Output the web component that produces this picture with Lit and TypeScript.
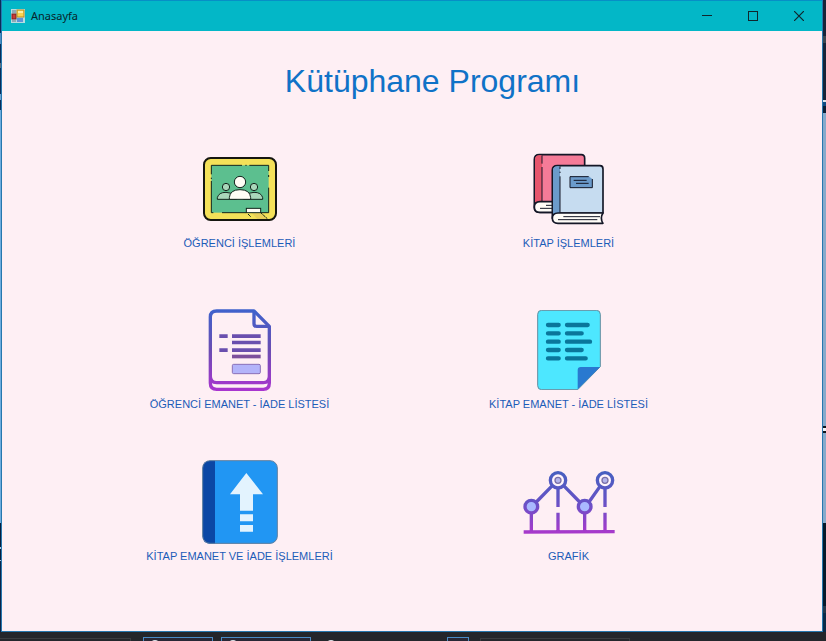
import { LitElement, html, css, svg } from "lit";
import { customElement, property } from "lit/decorators.js";

const board = svg`<svg width="76" height="66" viewBox="96 33 228 198" aria-hidden="true">
  <rect x="102" y="39" width="216" height="186" rx="20" fill="#f4e159" stroke="#15160f" stroke-width="6"/>
  <rect x="124" y="61" width="172" height="142" fill="#5cbf8f"/>
  <path d="M124 88V61H216M226 61H230M238 61H296V78M296 90V96M296 128V203H272M228 203H156M130 203H124V108M124 102V98" fill="none" stroke="#12241c" stroke-width="3"/>
  <g stroke="#12241c" stroke-width="3">
    <circle cx="168" cy="126" r="11" fill="#a9d6ba"/><circle cx="252" cy="126" r="11" fill="#a9d6ba"/>
    <path d="M142 163V158Q146 142 168 142Q184 142 190 152L200 163Z" fill="#a9d6ba"/>
    <path d="M278 163V158Q274 142 252 142Q236 142 230 152L220 163Z" fill="#a9d6ba"/>
    <circle cx="210" cy="111" r="17" fill="#fffdf5"/>
    <path d="M178 163V158Q180 134 210 134Q240 134 242 158V163Z" fill="#fffdf5"/>
    <path d="M244 203H272L292 222H262Z" fill="#e9cf59" stroke="none"/>
    <path d="M272 203L292 221M234 207L243 216" fill="none" stroke-dasharray="8 2"/>
    <rect x="229" y="190" width="43" height="13" fill="#fffdf5"/>
  </g>
</svg>`;

const books = svg`<svg width="72" height="72" viewBox="103 24 216 216" aria-hidden="true">
  <g stroke="#141727" stroke-width="5" stroke-linejoin="round">
    <path d="M107 188V44Q107 29 122 29H248Q258 29 258 40V202H124Q107 202 107 188Z" fill="#f57b98"/>
    <path d="M109 180V44Q109 31 122 31H130V170Q114 170 109 180Z" fill="#e6556c" stroke="none"/>
    <path d="M107 186Q107 170 124 170H170V202H124Q107 202 107 186Z" fill="#fffdf8"/>
    <path d="M130 31V56M130 66V169" stroke-width="3"/>
    <path d="M142 181H162M124 190H162" stroke-width="3" fill="none"/>
    <path d="M161 220V76Q161 62 176 62H304Q313 62 313 72V204H178Q161 206 161 220Z" fill="#c6dcf0"/>
    <path d="M163 212V76Q163 64 176 64H184V203Q170 204 163 212Z" fill="#6b9bcb" stroke="none"/>
    <path d="M184 64V72M184 80V84M184 94V203" stroke-width="3"/>
    <path d="M313 204H178Q161 204 161 220Q161 235 178 235H313Q303 219 313 204Z" fill="#fffdf8"/>
    <path d="M194 215H304M178 224H296" stroke-width="3" fill="none"/>
    <path d="M214 94H270L281 102V128H214Z" fill="#6b9bcb" stroke="none"/>
    <path d="M270 95H214V128H281V102" stroke-width="3" fill="none"/>
    <path d="M225 106H264M232 115H270" stroke-width="3" fill="none"/>
  </g>
</svg>`;

const form = svg`<svg width="64" height="82" viewBox="204 26 192 246" aria-hidden="true">
  <defs><linearGradient id="form" gradientUnits="userSpaceOnUse" x1="0" y1="28" x2="0" y2="270">
    <stop offset="0" stop-color="#3f62cc"/><stop offset=".5" stop-color="#6a4db2"/><stop offset="1" stop-color="#a935cf"/>
  </linearGradient></defs>
  <g fill="none" stroke="url(#form)" stroke-width="10" stroke-linejoin="round">
    <path d="M211 228V50Q211 32 230 32H342L388 78V228Q388 247 370 247H230Q211 247 211 228V248Q211 267 230 267H370Q388 267 388 248V228"/>
    <path d="M342 32V70Q342 78 350 78H388"/>
  </g>
  <g fill="#6a4fae">
    <path d="M238 102H263V113H238ZM276 102H362V113H276ZM276 121H362V132H276ZM238 144H263V155H238ZM276 144H362V155H276Z"/>
    <path d="M276 163H362V174H276Z" fill="#7d509c"/>
  </g>
  <rect x="277" y="192" width="84" height="28" rx="4" fill="#b3b4fa" stroke="#8a70b8" stroke-width="3"/>
</svg>`;

const sheet = svg`<svg width="64" height="80" viewBox="174 30 192 240" aria-hidden="true">
  <path d="M188 31H352Q364 31 364 43V200L296 269H188Q176 269 176 257V43Q176 31 188 31Z" fill="#4de7ff" stroke="#668ea0" stroke-width="3"/>
  <path d="M296 268V210Q296 201 305 201H363Z" fill="#2979d0"/>
  <path d="M207 75H239M264 75H326M207 100H239M264 100H308M207 125H239M264 125H333M207 150H239M264 150H308M207 175H239M264 175H320" stroke="#0a769b" stroke-width="13" stroke-linecap="round"/>
</svg>`;

const upload = svg`<svg width="76" height="84" viewBox="186 29 228 252" aria-hidden="true">
  <rect x="188" y="31" width="224" height="249" rx="22" fill="#2196f3"/>
  <path d="M225 31H210Q188 31 188 53V258Q188 280 210 280H225Z" fill="#0b47a5"/>
  <rect x="188" y="31" width="224" height="248" rx="22" fill="none" stroke="#62809f" stroke-width="3"/>
  <path d="M319 68L369 132H339V181H300V132H270ZM300 192H339V213H300ZM300 224H339V244H300Z" fill="#e3f3fe"/>
</svg>`;

const chart = svg`<svg width="92" height="66" viewBox="72 56 276 198" aria-hidden="true">
  <defs><linearGradient id="chart" gradientUnits="userSpaceOnUse" x1="0" y1="62" x2="0" y2="248">
    <stop offset="0" stop-color="#4660c0"/><stop offset=".5" stop-color="#6652c6"/><stop offset="1" stop-color="#a839cb"/>
  </linearGradient></defs>
  <g fill="none" stroke="url(#chart)" stroke-width="10">
    <path d="M112 155L160 106M194 106L242 155M270 155L303 108M97 190V244M177 114V170M177 187V244M257 190V244M318 114V170M318 187V244M74 245L347 244"/>
    <circle cx="177" cy="90" r="23" fill="#fff5fb"/><circle cx="318" cy="90" r="23" fill="#fff5fb"/>
    <circle cx="97" cy="169" r="19" fill="#a9b9ff"/><circle cx="257" cy="169" r="19" fill="#a9b9ff"/>
  </g>
  <g fill="#b5b5ec" stroke="#7a70a8" stroke-width="4"><circle cx="177" cy="90" r="9"/><circle cx="318" cy="90" r="9"/></g>
</svg>`;

@customElement("menu-tile")
class MenuTile extends LitElement {
  @property() label = "";
  @property({ attribute: false }) icon: unknown;

  static styles = css`
    :host { display: block; }
    .tile {
      display: flex; flex-direction: column; align-items: center; gap: 4px;
      width: 100%; padding: 0; border: 0; background: none; cursor: pointer;
      font: 11px/16px "Liberation Sans", Arial, sans-serif; color: #1c5cb8; white-space: nowrap;
    }
    .icon { display: flex; align-items: center; justify-content: center; height: 84px; }
    .icon svg { display: block; }
  `;

  render() {
    return html`<button class="tile" type="button"><span class="icon">${this.icon}</span><span>${this.label}</span></button>`;
  }
}

@customElement("app-root")
class AppRoot extends LitElement {
  static styles = css`
    :host {
      display: flex; flex-direction: column; min-height: 100vh; background: #24262b;
      font-family: "Liberation Sans", Arial, sans-serif;
    }
    .desktop { display: flex; flex: 1; }
    .edge-left {
      width: 1px;
      background: linear-gradient(#0a2b57 33px, #4f8fc4 33px 44px, #0a2b57 44px 63px, #5d6d80 63px 68px,
        #0a2b57 68px 94px, #6fa5d5 94px 100px, #0a2b57 100px 110px, #6fadde 110px 523px,
        #071d3c 523px 547px, #a9c9e6 547px 549px, #071d3c 549px 560px, #a9c9e6 560px 561px, #0b2447 561px);
    }
    .edge-right {
      width: 3px;
      background: linear-gradient(#182338 36px, #3d454f 36px 43px, #182338 43px 100px, #dde4ea 100px 102px,
        #0f4a80 102px 106px, #0b1d33 106px 113px, #86aacb 113px 426px, #10151c 426px 428px, #f2f5f8 428px 431px,
        #10151c 431px 433px, #86aacb 433px 523px, #06182a 523px 606px, #24364a 606px 613px, #0a2947 613px);
    }
    .window {
      flex: 1; display: flex; flex-direction: column; min-width: 0;
      border: 1px solid #2677ae; border-top-color: #078fc6; background: #feeff4;
    }
    .titlebar { display: flex; align-items: center; height: 30px; background: #03b7c7; }
    .app-icon { display: block; margin-left: 9px; }
    .caption { flex: 1; margin-left: 6px; font: 11px/16px "Noto Sans", "Open Sans", sans-serif; color: #08252b; }
    .control {
      display: flex; align-items: center; justify-content: center;
      width: 46px; height: 30px; padding: 0; border: 0; background: none; color: #10262d;
    }
    main { flex: 1; padding: 30px 89px 24px 73px; }
    h1 {
      margin: 0 0 46px; padding-left: 57px; text-align: center;
      font-size: 32px; line-height: 40px; font-weight: 400; color: #0f72c7;
    }
    .menu {
      display: grid; grid-template-columns: 1fr 1fr; grid-template-rows: 113px auto auto; row-gap: 48px;
    }
    .taskbar { display: flex; height: 9px; overflow: hidden; }
    .group { box-sizing: border-box; flex: none; margin-top: 5px; height: 12px; border: 1px solid #4a8ac4; background: #282735; }
    .plain { border-color: #3a3c40; background: none; margin-top: 6px; }
    .bare { border-color: transparent; background: none; }
    .g1 { width: 132px; margin-left: -1px; }
    .g2 { width: 70px; margin-left: 12px; }
    .g3 { width: 90px; margin-left: 8px; }
    .g4 { width: 116px; margin-left: 8px; }
    .g5 { width: 22px; margin-left: 12px; }
    .g6 { width: 150px; margin-left: 11px; }
    .dot { display: block; width: 8px; height: 8px; margin: 2px 0 0 7px; border-radius: 4px; background: #dfe3e8; }
  `;

  render() {
    return html`
      <div class="desktop">
        <div class="edge-left"></div>
        <div class="window">
          <header class="titlebar">
            <svg class="app-icon" width="14" height="14" viewBox="0 0 14 14" aria-hidden="true">
              <rect width="14" height="14" fill="#b8dce0"/>
              <rect x="1" y="5" width="4" height="5" fill="#c93a36" stroke="#7d2023"/>
              <rect x="6" y="1" width="7" height="7" fill="#fbd450" stroke="#b88b22"/>
              <path d="M7 2H12V4H7Z" fill="#fff0a5"/>
              <rect x="6" y="9" width="6" height="4" fill="#5f93d8"/>
              <path d="M1 1H5V4H1ZM1 11H5V13H1Z" fill="#8fa9b5"/>
            </svg>
            <span class="caption">Anasayfa</span>
            <button class="control" type="button" aria-label="Simge durumuna küçült">
              <svg width="10" height="10" viewBox="0 0 10 10"><path d="M0 4.500H10" stroke="currentColor"/></svg>
            </button>
            <button class="control" type="button" aria-label="Ekranı kapla">
              <svg width="10" height="10" viewBox="0 0 10 10"><rect x=".5" y=".5" width="9" height="9" fill="none" stroke="currentColor"/></svg>
            </button>
            <button class="control" type="button" aria-label="Kapat">
              <svg width="10" height="10" viewBox="0 0 10 10"><path d="M0 0L10 10M10 0L0 10" stroke="currentColor" stroke-width="1.200"/></svg>
            </button>
          </header>
          <main>
            <h1>Kütüphane Programı</h1>
            <nav class="menu">
              <menu-tile label="ÖĞRENCİ İŞLEMLERİ" .icon=${board}></menu-tile>
              <menu-tile label="KİTAP İŞLEMLERİ" .icon=${books}></menu-tile>
              <menu-tile label="ÖĞRENCİ EMANET - İADE LİSTESİ" .icon=${form}></menu-tile>
              <menu-tile label="KİTAP EMANET - İADE LİSTESİ" .icon=${sheet}></menu-tile>
              <menu-tile label="KİTAP EMANET VE İADE İŞLEMLERİ" .icon=${upload}></menu-tile>
              <menu-tile label="GRAFİK" .icon=${chart}></menu-tile>
            </nav>
          </main>
        </div>
        <div class="edge-right"></div>
      </div>
      <div class="taskbar">
        <div class="group plain g1"></div>
        <div class="group g2"><span class="dot"></span></div>
        <div class="group g3"><span class="dot"></span></div>
        <div class="group bare g4"><span class="dot"></span></div>
        <div class="group g5"></div>
        <div class="group plain g6"></div>
      </div>
    `;
  }
}
